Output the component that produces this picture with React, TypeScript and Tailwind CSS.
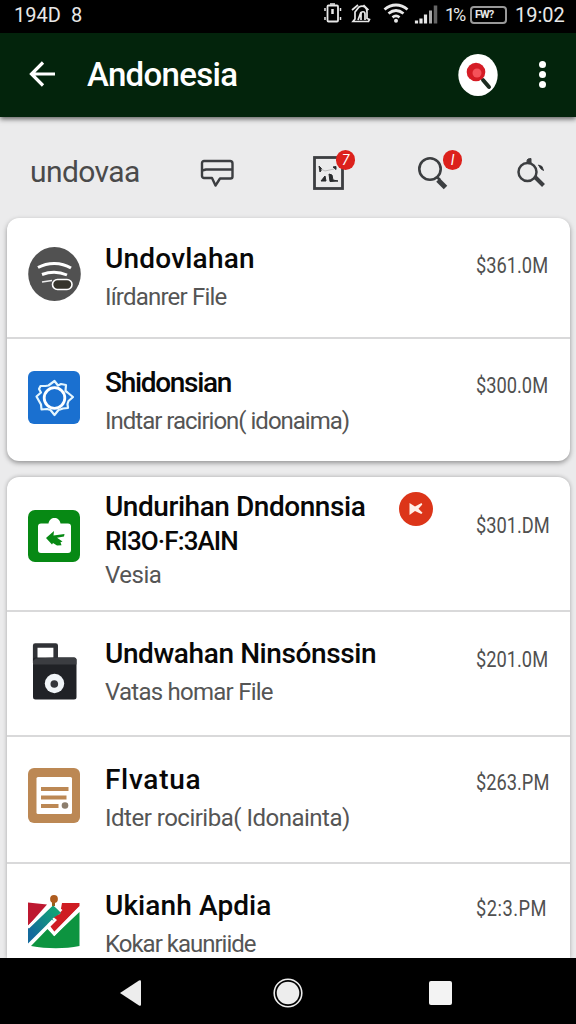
import type { ReactNode } from "react";

type Row = {
  icon: ReactNode;
  iconTop: string;
  title: string;
  titleClass: string;
  titleExtra?: string;
  sub: string;
  subClass: string;
  price: string;
  priceClass: string;
  textTop: string;
  height: string;
  flagged?: boolean;
};

function SignalIcon() {
  return (
    <svg width="53" height="54" viewBox="0 0 53 54" fill="none">
      <ellipse cx="26.5" cy="27" rx="26.3" ry="27" fill="#515151" />
      <path d="M10 20.5C20 15 33 15 43 21" stroke="#fff" strokeWidth="3" />
      <path d="M14 27.500c8-3 17-3 25 .5" stroke="#fff" strokeWidth="3" />
      <path d="M14 35l10-1.5" stroke="#eee" strokeWidth="1.6" />
      <rect x="24.5" y="32.5" width="19.5" height="10" rx="5" fill="#37352c" stroke="#fff" strokeWidth="1.6" />
    </svg>
  );
}

function GearIcon() {
  return (
    <svg width="52" height="53" viewBox="0 0 52 53" fill="none">
      <rect width="52" height="53" rx="6" fill="#1a70d0" />
      <path
        d="M26.500 10l3.500 4.500 3-1.500 5 1-.5 6 2 1.500 5.500 4.500-4.500 4-1 3 .5 4-5 .5-4.500 1.500-4 5-4-5-3.500-1-5.500.5-.5-5-2-3.500-2.500-4.500 4.500-4-2-3.500 1.500-3 5 0 3-.5z"
        stroke="#e4f6ff"
        strokeWidth="2.2"
        strokeLinejoin="round"
      />
      <circle cx="26.500" cy="27" r="10.300" stroke="#fff" strokeWidth="2.800" />
    </svg>
  );
}

function BagIcon() {
  return (
    <svg width="52" height="52" viewBox="0 0 52 52">
      <rect width="52" height="52" rx="7" fill="#078914" />
      <path d="M13 13.500h7.500c.5-3.500 3-5.500 6-5.500s5.500 2 6 5.500H40a3 3 0 0 1 3 3V40a3 3 0 0 1-3 3H13a3 3 0 0 1-3-3V16.500a3 3 0 0 1 3-3z" fill="#fff" />
      <path d="M18 28l8-7-.5 4.500 11-1.500-.5 2.500-7 1.200 5.500 3.800-2 .7 1 3-4.500.3-4-2.500-1 1.500z" fill="#078914" />
    </svg>
  );
}

function LockIcon() {
  return (
    <svg width="52" height="57" viewBox="0 0 52 57">
      <path d="M7.200 20V2.500h20.500V17" fill="none" stroke="#303236" strokeWidth="4.600" strokeLinejoin="round" />
      <rect x="5" y="14.500" width="43.500" height="42" rx="2.500" fill="#202226" />
      <path d="M7.500 15.500 27 14.500h19a2.500 2.500 0 0 1 2.500 2.500v4.500H5V18z" fill="#3b3d41" />
      <circle cx="26.500" cy="40.500" r="9.700" fill="#f1f5f8" />
      <circle cx="26.300" cy="41" r="3.800" fill="#34363a" />
    </svg>
  );
}

function NoteIcon() {
  return (
    <svg width="52" height="55" viewBox="0 0 52 55">
      <rect width="52" height="55" rx="6" fill="#bc8854" />
      <rect x="8.500" y="9" width="35.500" height="37" rx="1.500" fill="#fff" />
      <path d="M13 21h27.500M13 29.500h25.500M13 38h17.500" stroke="#bc8854" strokeWidth="4" />
      <circle cx="37" cy="37.500" r="3.300" fill="#8c7d6c" />
    </svg>
  );
}

function ChartIcon() {
  return (
    <svg width="52" height="54" viewBox="0 0 52 54">
      <defs>
        <linearGradient id="band" x1="1" y1="0" x2="0" y2="1">
          <stop offset=".2" stopColor="#12a078" />
          <stop offset=".8" stopColor="#146a9c" />
        </linearGradient>
      </defs>
      <path d="M0 7.500l19 2L0 31z" fill="#bd1830" />
      <path d="M34 8h17.500v3L26 37l-5-4 8-8-5-4 8-2z" fill="#cf1c22" />
      <path d="M3 51 19.500 34l6.500 7L51.500 17v34c-15 3-32 3-48.500 0z" fill="#0d9440" />
      <path d="M0 33.500 25 9l8 9-8.500 5.500 1 2.500L0 50z" fill="url(#band)" />
      <path d="M0 32.500 25 8.500M25 8.500l8.500 7.500M0 50.500 20 30.500l6.500 8.500L51.500 13.500M20 30.500l5-5" fill="none" stroke="#fff" strokeWidth="2.800" />
      <path d="M25.500 6v5" stroke="#91611e" strokeWidth="3" />
      <circle cx="26" cy="4" r="3.900" fill="#ae5c1f" />
    </svg>
  );
}

const firstCard: Row[] = [
  {
    icon: <SignalIcon />,
    iconTop: "pt-[29px]",
    title: "Undovlahan",
    titleClass: "tracking-[0.2px]",
    sub: "Iírdanrer File",
    subClass: "tracking-[-0.8px]",
    price: "$361.0M",
    priceClass: "pt-[36px]",
    textTop: "pt-[23px]",
    height: "h-[121px]",
  },
  {
    icon: <GearIcon />,
    iconTop: "pt-8",
    title: "Shidonsian",
    titleClass: "tracking-[-1.3px]",
    sub: "Indtar racirion( idonaima)",
    subClass: "tracking-[-1px]",
    price: "$300.0M",
    priceClass: "pt-[35px]",
    textTop: "pt-[26px]",
    height: "h-[122px]",
  },
];

const secondCard: Row[] = [
  {
    icon: <BagIcon />,
    iconTop: "pt-[33px]",
    title: "Undurihan Dndonnsia",
    titleClass: "tracking-[-0.45px]",
    titleExtra: "RI3O·F:3AIN",
    sub: "Vesia",
    subClass: "tracking-[-0.5px]",
    price: "$301.DM",
    priceClass: "pt-[37px]",
    textTop: "pt-[12px]",
    height: "h-[135px]",
    flagged: true,
  },
  {
    icon: <LockIcon />,
    iconTop: "pt-[31px]",
    title: "Undwahan Ninsónssin",
    titleClass: "tracking-[-0.4px]",
    sub: "Vatas homar File",
    subClass: "tracking-[-0.75px]",
    price: "$201.0M",
    priceClass: "pt-[36px]",
    textTop: "pt-[24px]",
    height: "h-[125px]",
  },
  {
    icon: <NoteIcon />,
    iconTop: "pt-[31px]",
    title: "Flvatua",
    titleClass: "tracking-[0.7px]",
    sub: "Idter rociriba( Idonainta)",
    subClass: "tracking-[-0.5px]",
    price: "$263.PM",
    priceClass: "pt-[34px]",
    textTop: "pt-[25px]",
    height: "h-[127px]",
  },
  {
    icon: <ChartIcon />,
    iconTop: "pt-[31px]",
    title: "Ukianh Apdia",
    titleClass: "tracking-[0.1px]",
    sub: "Kokar kaunriide",
    subClass: "tracking-[-1px]",
    price: "$2:3.PM",
    priceClass: "pt-[33px] tracking-[0.6px]",
    textTop: "pt-[24px]",
    height: "h-[110px]",
  },
];

function AppRow({ row }: { row: Row }) {
  return (
    <div className={`flex shrink-0 items-start border-b-2 border-[#d9d9da] pr-[21px] pl-[21px] last:border-b-0 ${row.height}`}>
      <div className={`w-[77px] shrink-0 ${row.iconTop}`}>{row.icon}</div>
      <div className={`min-w-0 flex-1 whitespace-nowrap ${row.textTop}`}>
        <p className={`text-[28px] leading-9 font-medium text-[#080808] ${row.titleClass}`}>{row.title}</p>
        {row.titleExtra && (
          <p className="text-[26px] leading-8 font-medium tracking-[-0.9px] text-[#080808]">{row.titleExtra}</p>
        )}
        <p className={`text-2xl text-[#555] ${row.titleExtra ? "leading-9" : "leading-10"} ${row.subClass}`}>{row.sub}</p>
      </div>
      {row.flagged && (
        <div className="mt-[15px] mr-[43px] flex size-[34px] shrink-0 items-center justify-center rounded-full bg-[#dc3519]">
          <svg width="14" height="14" viewBox="0 0 14 14" fill="#fff0e8">
            <path d="M.5 1 6 4.500 12.500 1l.8 1.500L9.500 6.700l4 4-1.200 1.300L6 9 .5 13z" />
          </svg>
        </div>
      )}
      <p className={`w-[73px] shrink-0 origin-left scale-x-[0.83] text-[22px] leading-6 whitespace-nowrap text-[#505050] ${row.priceClass}`}>
        {row.price}
      </p>
    </div>
  );
}

function Badge({ children }: { children: ReactNode }) {
  return (
    <span className="absolute -top-[3px] left-[23px] flex h-[20px] w-[19px] items-center justify-center rounded-full bg-[#dc211c] text-sm text-white italic">
      {children}
    </span>
  );
}

function StatusBar() {
  return (
    <div className="flex h-[33px] shrink-0 items-center bg-black pb-[4px] pl-[14px] text-xl text-[#e8e8e8]">
      <span className="w-[57px]">194D</span>
      <span>8</span>
      <div className="ml-auto flex items-center">
        <svg width="126" height="28" viewBox="0 0 126 28" fill="none" stroke="#e8e8e8">
          <rect x="10.500" y="4.500" width="10.500" height="16" rx="1" strokeWidth="1.800" />
          <path d="M13 3h5M8 7v3m0 6v3M23.500 7v3m0 6v3" strokeWidth="1.500" />
          <path d="M15.500 8v5" strokeWidth="2.500" />
          <path d="M36 20.500h15.500l1-2-2.500-1V11c0-5-4-7-8-5l-4 5v7zM35 9l6-5M51.500 9l-5-5M41 19l3-8M44 19v-6c0-3 4-3 4 0v6" strokeWidth="1.700" />
          <path d="M67.500 8.500c7-6 16-6 23 0M71.500 12.500c5-4 10-4 15 0M75.500 16.300c2.500-2 4.500-2 7 0" strokeWidth="2.800" />
          <circle cx="79" cy="19.700" r="2" fill="#e8e8e8" stroke="none" />
          <path d="M99.500 22.500v-3M104 22.500v-5M108.500 22.500v-9" strokeWidth="3.200" />
          <path d="M113.500 22.500v-13" stroke="#aaa" strokeWidth="3" />
          <path d="M118.500 22.500v-18" stroke="#666" strokeWidth="3.500" />
        </svg>
        <span className="w-[27px] pl-[2px] text-lg tracking-[-2px]">1%</span>
        <div className="flex h-[18px] w-[37px] items-center rounded-sm border-2 border-[#999] pl-[3px] text-[11px] leading-none font-bold tracking-[-1px]">
          FW?
        </div>
        <span className="ml-[8px] w-[61px]">19:02</span>
      </div>
    </div>
  );
}

export default function App() {
  return (
    <main className="flex h-[1024px] w-[576px] flex-col overflow-hidden bg-[#ebebec] font-['Roboto',sans-serif]">
      <StatusBar />

      <header className="z-10 flex h-[84px] shrink-0 items-center bg-[#03240c] pl-[29px] text-white shadow-[0_2px_5px_rgba(0,0,0,0.6)]">
        <svg className="-mt-[3px]" width="26" height="26" viewBox="0 0 26 26" fill="none" stroke="#fff" strokeWidth="3.2">
          <path d="M26 13H3M14 1.500 2.500 13 14 24.500" />
        </svg>
        <h1 className="ml-[32px] text-[33px] leading-10 font-medium tracking-[-0.7px]">Andonesia</h1>
        <div className="-mt-px ml-auto flex items-center">
          <svg width="40" height="42" viewBox="0 0 40 42">
            <ellipse cx="20" cy="21" rx="19.700" ry="21" fill="#fff" />
            <path d="M25 26l6 7" stroke="#1b2b20" strokeWidth="4" strokeLinecap="round" />
            <circle cx="18" cy="18" r="9.300" fill="#d51c25" />
            <circle cx="19" cy="19" r="4.500" fill="#f5525a" />
          </svg>
          <div className="mr-[30px] ml-[41px] flex flex-col gap-[3px]">
            <span className="size-[7px] rounded-full bg-white" />
            <span className="size-[7px] rounded-full bg-white" />
            <span className="size-[7px] rounded-full bg-white" />
          </div>
        </div>
      </header>

      <nav className="flex h-[101px] shrink-0 items-start pt-[36px] pl-[30px] text-[#4a4a4a]">
        <span className="w-[170px] pt-px text-[30px] leading-9 tracking-[-0.6px]">undovaa</span>
        <svg className="mt-[5px]" width="35" height="30" viewBox="0 0 35 30" fill="none" stroke="#3c3e41" strokeWidth="2.400" strokeLinejoin="round">
          <path d="M4 3h26a2.500 2.500 0 0 1 2.500 2.500v13A2 2 0 0 1 30.500 20.500H20l-4.500 7L12 20H4a2 2 0 0 1-2-2V5a2 2 0 0 1 2-2z" />
          <path d="M2 12.500 6 11.500h26" />
        </svg>
        <div className="relative ml-[78px] pt-[3px]">
          <svg width="31" height="34" viewBox="0 0 31 34">
            <rect x="1.500" y="1.500" width="28" height="31" fill="none" stroke="#3c3e41" strokeWidth="2.800" />
            <path d="M6 10l3 3-2 3zM8 25l4-5 1 5zM16 18l3 1 1 5 5 1-8 .5zM20 11l3-.5v3z" fill="#292b2d" stroke="#292b2d" />
            <path d="M8 13l4 2 9-2" fill="none" stroke="#bbb" />
          </svg>
          <Badge>7</Badge>
        </div>
        <div className="relative ml-[73px] pt-[3px]">
          <svg width="31" height="34" viewBox="0 0 31 34" fill="none" stroke="#3c3e41">
            <circle cx="13" cy="13" r="10.700" strokeWidth="2.600" />
            <path d="M21 24l7.500 7.500" strokeWidth="5" />
            <path d="M20 21l3 3" strokeWidth="2.500" />
          </svg>
          <div className="absolute top-0 left-[3px]">
            <Badge>I</Badge>
          </div>
        </div>
        <svg className="mt-[2px] ml-[69px]" width="31" height="34" viewBox="0 0 31 34" fill="none" stroke="#3c3e41">
          <circle cx="10.500" cy="17" r="9" strokeWidth="2.500" />
          <path d="M18 22l8.500 8.500" strokeWidth="4" />
          <path d="M10 8V5.500q0-2 4-2V8z" fill="#3c3e41" />
          <path d="M21.500 10l3.500 1.500 1.500 4q-3-1-5-5.500z" fill="#292b2d" />
        </svg>
      </nav>

      <section className="mx-[7px] h-[243px] w-[563px] shrink-0 rounded-[12px] bg-white shadow-[0_2px_5px_rgba(0,0,0,0.38)]">
        {firstCard.map((row) => (
          <AppRow key={row.title} row={row} />
        ))}
      </section>

      <section className="mx-[7px] mt-4 flex h-[481px] w-[563px] shrink-0 flex-col overflow-hidden rounded-t-[12px] bg-white shadow-[0_0_4px_rgba(0,0,0,0.3)]">
        {secondCard.map((row) => (
          <AppRow key={row.title} row={row} />
        ))}
      </section>

      <footer className="z-10 flex h-[66px] shrink-0 items-center bg-black pb-[2px] pl-[120px]">
        <svg className="mt-[6px]" width="22" height="28" viewBox="0 0 22 28" fill="#ededed">
          <path d="M0 14 19 1.500q2-1 2 1v23q0 2-2 1z" />
        </svg>
        <svg className="mt-[6px] ml-[131px]" width="30" height="30" viewBox="0 0 30 30" fill="none">
          <circle cx="15" cy="15" r="13.800" stroke="#eee" strokeWidth="1.600" />
          <circle cx="15" cy="15" r="11.300" fill="#ededed" />
        </svg>
        <span className="mt-[6px] ml-[126px] h-[24px] w-[23px] rounded-[2px] bg-[#f3f3f3]" />
      </footer>
    </main>
  );
}
